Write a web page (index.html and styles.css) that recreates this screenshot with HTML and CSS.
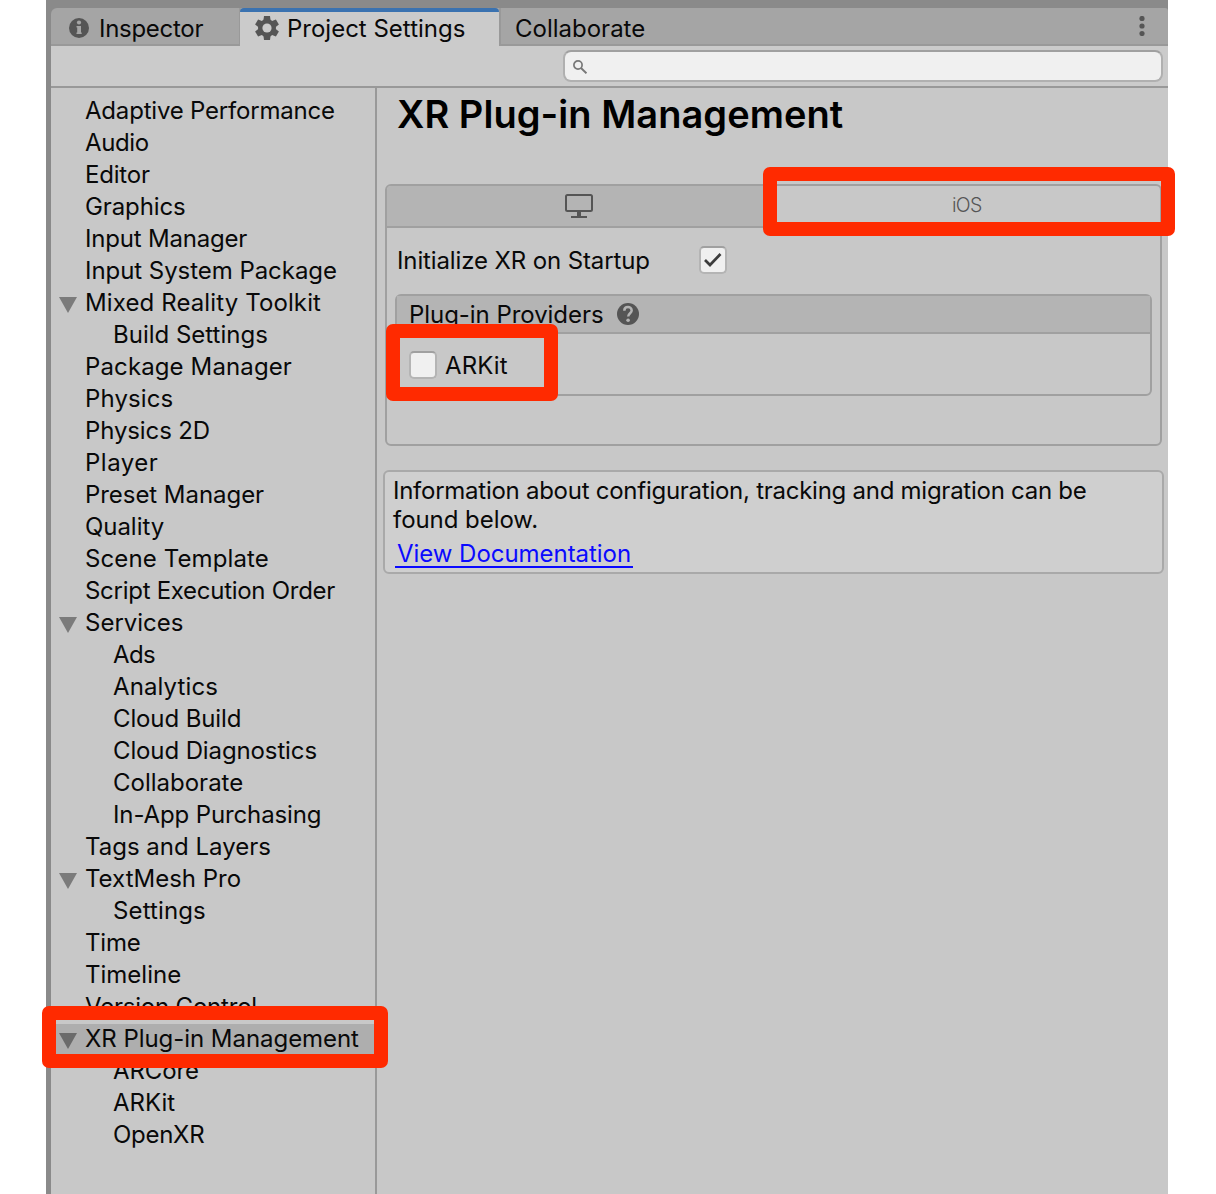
FILE: index.html
```html
<!DOCTYPE html>
<html lang="en">
<head>
<meta charset="utf-8">
<title>Project Settings</title>
<link rel="stylesheet" href="styles.css">
</head>
<body>
<div class="window">
  <header class="tabs">
    <div class="tab tab-inspector">
      <svg class="icon-info" viewBox="0 0 20 20"><circle cx="10" cy="10" r="10" fill="#555"/><circle cx="10" cy="4.500" r="2.100" fill="#a5a5a5"/><path d="M7.500 8h4.500v6.500h.7V16H7.500v-1.500h.7V9.500h-.7z" fill="#a5a5a5"/></svg>
      <span class="snug-3">Inspector</span>
    </div>
    <div class="tab tab-active">
      <svg class="icon-gear" viewBox="-12 -12 24 24"><g fill="#555"><circle r="9"/><path id="tooth" d="M-3-12H3L3.800-6h-7.600z"/><use href="#tooth" transform="rotate(60)"/><use href="#tooth" transform="rotate(120)"/><use href="#tooth" transform="rotate(180)"/><use href="#tooth" transform="rotate(240)"/><use href="#tooth" transform="rotate(300)"/></g><circle r="4.600" fill="#cbcbcb"/></svg>
      <span>Project Settings</span>
    </div>
    <div class="tab tab-collab"><span>Collaborate</span></div>
    <svg class="icon-menu" viewBox="0 0 6 20"><g fill="#555"><circle cx="3" cy="2.500" r="2.600"/><circle cx="3" cy="10" r="2.600"/><circle cx="3" cy="17.500" r="2.600"/></g></svg>
  </header>
  <div class="toolbar">
    <div class="search">
      <svg class="icon-search" viewBox="0 0 14 14" fill="none" stroke="#777"><circle cx="5" cy="5" r="4.100" stroke-width="1.700"/><path d="M8 8l5.500 5.300" stroke-width="2"/></svg>
    </div>
  </div>
  <div class="body">
    <ul class="tree">
      <li class="snug-2">Adaptive Performance</li>
      <li class="snug-4">Audio</li>
      <li class="snug-2">Editor</li>
      <li class="snug-1">Graphics</li>
      <li class="snug-2">Input Manager</li>
      <li class="snug-0">Input System Package</li>
      <li class="open wide-1">Mixed Reality Toolkit</li>
      <li class="child">Build Settings</li>
      <li class="wide-1">Package Manager</li>
      <li class="wide-1">Physics</li>
      <li class="snug-1">Physics 2D</li>
      <li class="wide-5">Player</li>
      <li class="snug-0">Preset Manager</li>
      <li class="snug-0">Quality</li>
      <li class="wide-1">Scene Template</li>
      <li class="snug-3">Script Execution Order</li>
      <li class="open">Services</li>
      <li class="child snug-6">Ads</li>
      <li class="child wide-1">Analytics</li>
      <li class="child snug-1">Cloud Build</li>
      <li class="child snug-1">Cloud Diagnostics</li>
      <li class="child">Collaborate</li>
      <li class="child snug-1">In-App Purchasing</li>
      <li>Tags and Layers</li>
      <li class="open">TextMesh Pro</li>
      <li class="child wide-1">Settings</li>
      <li class="snug-2">Time</li>
      <li>Timeline</li>
      <li class="snug-2">Version Control</li>
      <li class="open selected snug-0">XR Plug-in Management</li>
      <li class="child snug-1">ARCore</li>
      <li class="child">ARKit</li>
      <li class="child snug-3">OpenXR</li>
    </ul>
    <main class="content">
      <h1>XR Plug-in Management</h1>
      <section class="platforms">
        <div class="platform-tabs">
          <div class="platform desktop">
            <svg class="icon-monitor" viewBox="0 0 28 24" fill="none" stroke="#555" stroke-width="2"><rect x="1" y="1" width="26" height="16" rx="1.500"/><path d="M14 17v6" stroke-width="4"/><path d="M6 23h16"/></svg>
          </div>
          <div class="platform ios">iOS</div>
        </div>
        <div class="startup">
          <span class="startup-label snug-1">Initialize XR on Startup</span>
          <span class="checkbox"><svg viewBox="0 0 24 24" fill="none" stroke="#3c3c3c" stroke-width="2.700"><path d="M4 12l5 5L19.500 6"/></svg></span>
        </div>
        <div class="providers">
          <div class="providers-head">
            <span class="snug-0">Plug-in Providers</span>
            <svg class="icon-help" viewBox="0 0 22 22"><circle cx="11" cy="11" r="11" fill="#555"/><path d="M7.300 7.800C7.300 2.800 14.700 3 14.700 7.600c0 2.700-3.500 2.700-3.500 6" fill="none" stroke="#b4b4b4" stroke-width="2.500"/><circle cx="11.100" cy="17.300" r="1.800" fill="#b4b4b4"/></svg>
          </div>
          <div class="provider"><span class="checkbox"></span><span class="wide-1">ARKit</span></div>
        </div>
      </section>
      <section class="info">
        <p class="info-lead">Information about configuration, tracking and migration can be</p>
        <p class="snug-0">found below.</p>
        <a class="doc-link">View Documentation</a>
      </section>
    </main>
  </div>
</div>
<div class="callout callout-ios"></div>
<div class="callout callout-arkit"></div>
<div class="callout callout-xr"></div>
</body>
</html>
```
FILE: styles.css
```css
* { box-sizing: border-box; }
body {
  margin: 0;
  width: 1216px;
  height: 1194px;
  overflow: hidden;
  position: relative;
  background: #fff;
  font: 24px/32px Inter, "Liberation Sans", sans-serif;
  font-weight: 380;
  color: #090909;
}
svg { display: block; flex: none; }

/* Label tracking */
.snug-0 { letter-spacing: -0.05px; }
.snug-1 { letter-spacing: -0.12px; }
.snug-2 { letter-spacing: -0.2px; }
.snug-3 { letter-spacing: -0.28px; }
.snug-4 { letter-spacing: -0.4px; }
.snug-6 { letter-spacing: -0.6px; }
.wide-1 { letter-spacing: 0.12px; }
.wide-5 { letter-spacing: 0.5px; }

.window {
  width: 1122px;
  height: 1194px;
  margin-left: 46px;
  padding: 8px 0 0 5px;
  display: flex;
  flex-direction: column;
  background: #8a8a8a;
}
.tabs {
  height: 38px;
  display: flex;
  background: #a5a5a5;
  border-radius: 6px 3px 0 0;
  position: relative;
}
.tab {
  display: flex;
  align-items: center;
  border-bottom: 2px solid #999;
  white-space: nowrap;
  padding-top: 5px;
}
.tab-inspector { width: 190px; padding-left: 18px; gap: 10px; border-right: 2px solid #999; }
.tab-inspector .icon-info { margin-top: -1px; }
.tab-active {
  width: 259px;
  margin-left: -1px;
  padding: 0 0 0 15px;
  gap: 8px;
  background: #cbcbcb;
  border-top: 4px solid #3a72b0;
  border-bottom: 0;
  border-radius: 4px 4px 0 0;
}
.tab-active .icon-gear { margin-top: -2px; }
.tab-collab { flex: 1; padding-left: 14px; border-left: 2px solid #999; }
.icon-info { width: 20px; height: 20px; }
.icon-gear { width: 24px; height: 24px; }
.icon-menu { width: 6px; height: 20px; position: absolute; right: 23px; top: 8px; }
.toolbar {
  height: 42px;
  padding: 4px 5px 0 0;
  display: flex;
  justify-content: flex-end;
  background: #cbcbcb;
  border-bottom: 2px solid #999;
}
.search {
  width: 600px;
  height: 32px;
  padding: 8px 0 0 8px;
  background: #f0f0f0;
  border: 2px solid #b0b0b0;
  border-top-color: #a0a0a0;
  border-radius: 8px;
}
.icon-search { width: 14px; height: 14px; }
.body { flex: 1; display: flex; background: #c8c8c8; }
.tree {
  width: 326px;
  margin: 0;
  padding: 8px 0 0;
  list-style: none;
  border-right: 2px solid #999;
}
.tree li { height: 32px; line-height: 29px; padding-left: 34px; white-space: nowrap; }
.tree .child { padding-left: 62px; }
.tree .open { padding-left: 8px; display: flex; align-items: flex-start; gap: 8px; }
.tree .open::before {
  content: "";
  width: 18px;
  height: 16px;
  margin-top: 9px;
  background: #7b7b7b;
  clip-path: polygon(0 0, 100% 0, 50% 100%);
}
.tree .selected { background: #aeaeae; }
.tree .selected::before { background: #6b6b6b; }
.content { flex: 1; padding: 0 4px 0 6px; }
h1 {
  margin: 0;
  padding: 5px 0 0 14px;
  height: 96px;
  font-size: 38px;
  line-height: 42px;
  font-weight: 600;
  letter-spacing: 0.05px;
  white-space: nowrap;
  color: #000;
}
.platforms { margin: 0 2px; width: 777px; height: 262px; border: 2px solid #a0a0a0; border-radius: 6px; overflow: hidden; }
.platform-tabs { height: 42px; display: flex; }
.platform { flex: 1; display: flex; justify-content: center; align-items: center; }
.desktop { background: #b4b4b4; border-bottom: 2px solid #a0a0a0; }
.icon-monitor { width: 28px; height: 24px; margin: 0 2px 1px 0; }
.ios { padding-bottom: 4px; font-size: 19.5px; font-weight: 300; letter-spacing: -0.7px; color: #555; }
.startup { height: 66px; padding: 0 0 0 10px; display: flex; align-items: center; }
.startup-label { width: 302px; }
.startup .checkbox { margin-bottom: 2px; }
.checkbox {
  width: 28px;
  height: 28px;
  background: #f0f0f0;
  border: 2px solid #b4b4b4;
  border-top-color: #a0a0a0;
  border-radius: 5px;
}
.checkbox svg { width: 24px; height: 24px; }
.providers { margin-left: 8px; width: 757px; height: 102px; border: 2px solid #a0a0a0; border-radius: 6px; }
.providers-head {
  height: 38px;
  padding-left: 12px;
  display: flex;
  align-items: center;
  gap: 13px;
  background: #b4b4b4;
  border-bottom: 2px solid #a0a0a0;
}
.providers-head span, .provider span:last-child { padding-top: 2px; }
.icon-help { width: 22px; height: 22px; }
.provider { height: 62px; padding-left: 12px; display: flex; align-items: center; gap: 8px; }
.info {
  width: 781px;
  height: 104px;
  margin-top: 24px;
  padding: 4px 8px 0;
  background: #cfcfcf;
  border: 2px solid #a9a9a9;
  border-radius: 6px;
}
.info p { margin: 0; line-height: 29px; white-space: nowrap; }
.info-lead { letter-spacing: -0.26px; }
.doc-link {
  display: block;
  width: 238px;
  height: 32px;
  margin: 2px 0 0 2px;
  padding: 0 2px;
  line-height: 35px;
  letter-spacing: -0.04px;
  white-space: nowrap;
  color: #0a0aff;
  border-bottom: 2px solid #0a0aff;
}
.callout { position: absolute; border: 14px solid #ff2a00; border-radius: 7px; }
.callout-ios { left: 763px; top: 167px; width: 412px; height: 69px; }
.callout-arkit { left: 386px; top: 324px; width: 172px; height: 77px; }
.callout-xr { left: 42px; top: 1006px; width: 346px; height: 62px; }
```
